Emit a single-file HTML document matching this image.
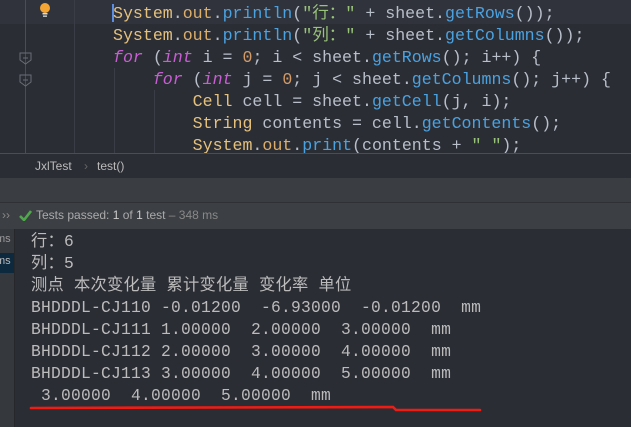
<!DOCTYPE html>
<html><head><meta charset="utf-8"><style>
body{margin:0;width:631px;height:427px;overflow:hidden;background:#2b2d35;position:relative;font-family:"Liberation Mono","Noto Sans CJK SC",monospace}
.a{position:absolute}
.code{left:113px;font-size:16.6px;color:#b8bfc9;white-space:pre;line-height:22px}
.k{color:#c75fd2;font-style:italic}.f{color:#4aa2e0}.c{color:#e5c17c}.s{color:#98c379}.n{color:#d19a66}.o{color:#dcae6a}
.con{left:31px;font-family:"Liberation Mono","Noto Sans CJK SC",monospace;font-size:16.25px;color:#bbbbbb;white-space:pre;line-height:22px;letter-spacing:0.25px}
</style></head><body>
<div class="a" style="left:0;top:0;width:631px;height:24px;background:#30333b"></div>
<div class="a" style="left:25px;top:0;width:1px;height:153px;background:#4a4d55"></div>
<div class="a" style="left:74px;top:0;width:1px;height:153px;background:#3a3d45"></div>
<div class="a" style="left:114px;top:68px;width:1px;height:85px;background:#3a3d45"></div>
<div class="a" style="left:154px;top:90px;width:1px;height:63px;background:#3a3d45"></div>
<div class="a" style="left:112px;top:4px;width:2px;height:18px;background:#5b8ee0"></div>
<svg class="a" style="left:38px;top:2px" width="14" height="16"><circle cx="7" cy="6" r="5" fill="#f4a533"/><rect x="4.5" y="11" width="5" height="1.5" fill="#ddd"/><rect x="5" y="13.5" width="4" height="1.3" fill="#ddd"/></svg>
<svg class="a" style="left:19px;top:52px" width="14" height="40"><path d="M1 1H12V8L6.5 12L1 8Z" fill="none" stroke="#6a6d75"/><path d="M4 6H9" stroke="#6a6d75"/><path d="M1 23H12V30L6.5 34L1 30Z" fill="none" stroke="#6a6d75"/><path d="M4 28H9" stroke="#6a6d75"/></svg>
<div class="a code" style="top:3px"><span class="c">System</span>.<span class="o">out</span>.<span class="f">println</span>(<span class="s">"行："</span> + sheet.<span class="f">getRows</span>());
<span class="c">System</span>.<span class="o">out</span>.<span class="f">println</span>(<span class="s">"列："</span> + sheet.<span class="f">getColumns</span>());
<span class="k">for</span> (<span class="k">int</span> i = <span class="n">0</span>; i &lt; sheet.<span class="f">getRows</span>(); i++) {
    <span class="k">for</span> (<span class="k">int</span> j = <span class="n">0</span>; j &lt; sheet.<span class="f">getColumns</span>(); j++) {
        <span class="c">Cell</span> cell = sheet.<span class="f">getCell</span>(j, i);
        <span class="c">String</span> contents = cell.<span class="f">getContents</span>();
        <span class="c">System</span>.<span class="o">out</span>.<span class="f">print</span>(contents + <span class="s">" "</span>);</div>
<div class="a" style="left:0;top:153px;width:631px;height:1px;background:#4a4d55"></div>
<div class="a" style="left:0;top:154px;width:631px;height:24px;background:#2b2d35;font-family:'Liberation Sans',sans-serif;font-size:12px;color:#bbb;line-height:24px"><span style="position:absolute;left:35px">JxlTest</span><span style="position:absolute;left:84px;color:#666">›</span><span style="position:absolute;left:97px">test()</span></div>
<div class="a" style="left:0;top:178px;width:631px;height:24px;background:#3a3d42"></div>
<div class="a" style="left:0;top:202px;width:631px;height:1px;background:#2e3035"></div>
<div class="a" style="left:0;top:203px;width:631px;height:26px;background:#3c3f43;font-family:'Liberation Sans',sans-serif;font-size:12px;color:#aaa;line-height:25px;white-space:pre"><span style="position:absolute;left:2px;color:#888">››</span><svg style="position:absolute;left:19px;top:7px" width="13" height="11"><path d="M1 6L5 10L12 1" fill="none" stroke="#4ea94a" stroke-width="2.6"/></svg><span style="position:absolute;left:36px">Tests passed: <span style="color:#ccc">1</span> of <span style="color:#ccc">1</span> test <span style="color:#888">– 348 ms</span></span></div>
<div class="a" style="left:0;top:229px;width:631px;height:198px;background:#2b2d35"></div>
<div class="a" style="left:0;top:229px;width:14px;height:198px;background:#35383d;border-right:1px solid #25272b;font-family:'Liberation Sans',sans-serif;font-size:11px;color:#999;overflow:hidden"><div style="position:absolute;top:24px;width:14px;height:20px;background:#0d293e"></div><span style="position:absolute;left:-4px;top:4px">ms</span><span style="position:absolute;left:-4px;top:26px;color:#bbb">ms</span></div>
<div class="a con" style="top:231px">行：6
列：5
测点 本次变化量 累计变化量 变化率 单位
BHDDDL-CJ110 -0.01200  -6.93000  -0.01200  mm
BHDDDL-CJ111 1.00000  2.00000  3.00000  mm
BHDDDL-CJ112 2.00000  3.00000  4.00000  mm
BHDDDL-CJ113 3.00000  4.00000  5.00000  mm
 3.00000  4.00000  5.00000  mm</div>
<svg class="a" style="left:28px;top:404px" width="460" height="12"><path d="M3 4L365 3L368 6L452 6" fill="none" stroke="#f01c14" stroke-width="2.6" stroke-linecap="round"/></svg>
</body></html>
